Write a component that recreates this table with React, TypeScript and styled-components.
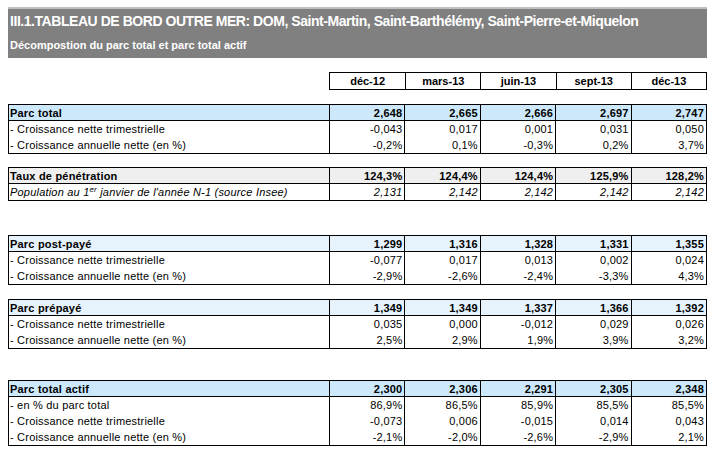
import React from "react";
import styled, { createGlobalStyle } from "styled-components";

const GlobalStyle = createGlobalStyle`
  html, body {
    margin: 0;
    padding: 0;
    background: #ffffff;
  }
  body {
    font-family: "Liberation Sans", Arial, sans-serif;
    color: #000000;
  }
`;

const Page = styled.div`
  width: 699px;
  padding: 7px 0 0 8px;
  display: flex;
  flex-direction: column;
`;

const Banner = styled.div`
  background: #808080;
  border-top: 2px solid #c0c0c0;
  padding: 3px 2px 6px 2px;
  display: flex;
  flex-direction: column;
  gap: 8px;
  color: #ffffff;
  font-weight: bold;
`;

const Title = styled.div`
  font-size: 14px;
  line-height: 18px;
  letter-spacing: -0.45px;
  white-space: nowrap;
`;

const Subtitle = styled.div`
  font-size: 11px;
  line-height: 14px;
`;

const PeriodBox = styled.div`
  margin: 14px 0 0 321px;
  border: 1px solid #000;
  display: grid;
  grid-template-columns: repeat(5, 1fr);
  height: 18px;
  box-sizing: border-box;
`;

const PeriodCell = styled.div`
  font-size: 11px;
  font-weight: bold;
  line-height: 16px;
  text-align: center;
  & + & {
    border-left: 1px solid #000;
  }
`;

const Section = styled.div<{ $gap: number }>`
  margin-top: ${(p) => p.$gap}px;
  border: 1px solid #000;
  display: grid;
  grid-template-columns: 320px repeat(5, 1fr);
`;

const Label = styled.div<{ $head?: boolean; $bg?: string; $italic?: boolean }>`
  height: 16px;
  box-sizing: border-box;
  font-size: 11px;
  line-height: 16px;
  letter-spacing: 0.2px;
  padding-left: 1px;
  white-space: nowrap;
  font-weight: ${(p) => (p.$head ? "bold" : "normal")};
  font-style: ${(p) => (p.$italic ? "italic" : "normal")};
  background: ${(p) => p.$bg || "transparent"};
  border-bottom: ${(p) => (p.$head ? "1px solid #000" : "none")};
  sup {
    font-size: 8px;
    line-height: 0;
    vertical-align: 4px;
  }
`;

const Value = styled(Label)`
  border-left: 1px solid #000;
  text-align: right;
  padding: 0 2px 0 0;
`;

type Row = { label: React.ReactNode; values: string[]; italic?: boolean };

type Block = {
  gap: number;
  title: string;
  bg: string;
  values: string[];
  rows: Row[];
};

const periods = ["déc-12", "mars-13", "juin-13", "sept-13", "déc-13"];

const blocks: Block[] = [
  {
    gap: 14,
    title: "Parc total",
    bg: "#cce8fa",
    values: ["2,648", "2,665", "2,666", "2,697", "2,747"],
    rows: [
      { label: "- Croissance nette trimestrielle", values: ["-0,043", "0,017", "0,001", "0,031", "0,050"] },
      { label: "- Croissance annuelle nette (en %)", values: ["-0,2%", "0,1%", "-0,3%", "0,2%", "3,7%"] },
    ],
  },
  {
    gap: 13,
    title: "Taux de pénétration",
    bg: "#efefef",
    values: ["124,3%", "124,4%", "124,4%", "125,9%", "128,2%"],
    rows: [
      {
        label: (
          <>
            Population au 1<sup>er</sup> janvier de l'année N-1 (source Insee)
          </>
        ),
        values: ["2,131", "2,142", "2,142", "2,142", "2,142"],
        italic: true,
      },
    ],
  },
  {
    gap: 34,
    title: "Parc post-payé",
    bg: "#e6f3fc",
    values: ["1,299", "1,316", "1,328", "1,331", "1,355"],
    rows: [
      { label: "- Croissance nette trimestrielle", values: ["-0,077", "0,017", "0,013", "0,002", "0,024"] },
      { label: "- Croissance annuelle nette (en %)", values: ["-2,9%", "-2,6%", "-2,4%", "-3,3%", "4,3%"] },
    ],
  },
  {
    gap: 14,
    title: "Parc prépayé",
    bg: "#e6f3fc",
    values: ["1,349", "1,349", "1,337", "1,366", "1,392"],
    rows: [
      { label: "- Croissance nette trimestrielle", values: ["0,035", "0,000", "-0,012", "0,029", "0,026"] },
      { label: "- Croissance annuelle nette (en %)", values: ["2,5%", "2,9%", "1,9%", "3,9%", "3,2%"] },
    ],
  },
  {
    gap: 31,
    title: "Parc total actif",
    bg: "#cce8fa",
    values: ["2,300", "2,306", "2,291", "2,305", "2,348"],
    rows: [
      { label: "- en % du parc total", values: ["86,9%", "86,5%", "85,9%", "85,5%", "85,5%"] },
      { label: "- Croissance nette trimestrielle", values: ["-0,073", "0,006", "-0,015", "0,014", "0,043"] },
      { label: "- Croissance annuelle nette (en %)", values: ["-2,1%", "-2,0%", "-2,6%", "-2,9%", "2,1%"] },
    ],
  },
];

export default function App() {
  return (
    <>
      <GlobalStyle />
      <Page>
        <Banner>
          <Title>
            III.1.TABLEAU DE BORD OUTRE MER: DOM, Saint-Martin, Saint-Barthélémy, Saint-Pierre-et-Miquelon
          </Title>
          <Subtitle>Décompostion du parc total et parc total actif</Subtitle>
        </Banner>

        <PeriodBox>
          {periods.map((p) => (
            <PeriodCell key={p}>{p}</PeriodCell>
          ))}
        </PeriodBox>

        {blocks.map((b) => (
          <Section key={b.title} $gap={b.gap}>
            <Label $head $bg={b.bg}>
              {b.title}
            </Label>
            {b.values.map((v, i) => (
              <Value key={i} $head $bg={b.bg}>
                {v}
              </Value>
            ))}
            {b.rows.map((r, ri) => (
              <React.Fragment key={ri}>
                <Label $italic={r.italic}>{r.label}</Label>
                {r.values.map((v, i) => (
                  <Value key={i} $italic={r.italic}>
                    {v}
                  </Value>
                ))}
              </React.Fragment>
            ))}
          </Section>
        ))}
      </Page>
    </>
  );
}
